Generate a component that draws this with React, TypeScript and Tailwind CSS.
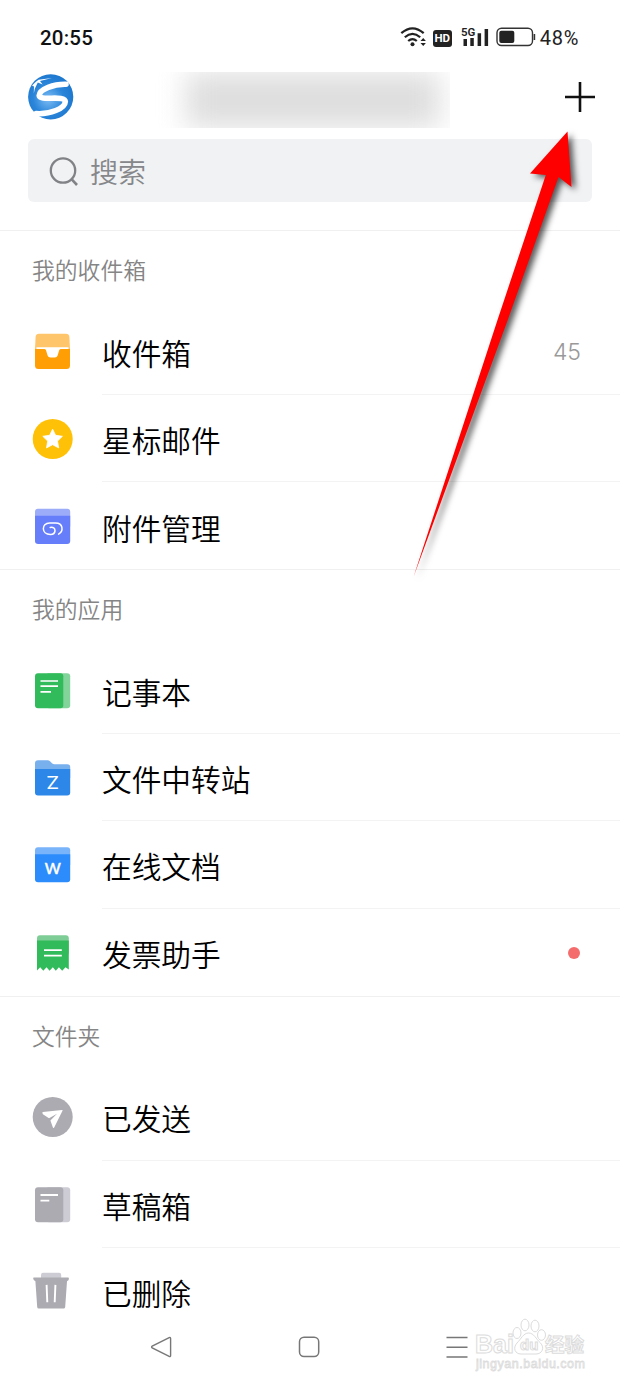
import React from "react";

const Glyph = ({ children }: { children: React.ReactNode }) => (
  <svg viewBox="0 0 41 41" className="w-[41px] h-[41px] shrink-0">
    {children}
  </svg>
);

const InboxIcon = () => (
  <Glyph>
    <path d="M7 2.7H34Q37 2.7 37.4 6L38 18H3L3.6 6Q4 2.7 7 2.7Z" fill="#ffc56b" />
    <path
      d="M3 18H13.2Q14.6 18 15 19.2L16.2 23.6Q16.8 25.8 19 25.8H22.2Q24.4 25.8 25 23.6L26.2 19.2Q26.6 18 28 18H38V34.5Q38 38 34.5 38H6.5Q3 38 3 34.5Z"
      fill="#ff9f05"
    />
    <path
      d="M4.5 16.3H36.5V18H29Q27.6 18 27.2 19.2L25.6 24.6Q25 26.6 22.8 26.6H18.4Q16.2 26.6 15.6 24.6L14 19.2Q13.6 18 12.2 18H4.5Z"
      fill="#fff"
    />
  </Glyph>
);

const StarIcon = () => (
  <Glyph>
    <circle cx="20.7" cy="20" r="20" fill="#ffc107" />
    <path
      d="M20.6 10.2L23.6 16.3L30.4 17.3L25.5 22.1L26.7 28.9L20.6 25.7L14.5 28.9L15.7 22.1L10.8 17.3L17.6 16.3Z"
      fill="#fff"
      stroke="#fff"
      strokeWidth="0.8"
      strokeLinejoin="round"
    />
  </Glyph>
);

const AttachmentIcon = () => (
  <Glyph>
    <rect x="3" y="2.7" width="35.2" height="20" rx="3" fill="#9dacf8" />
    <path d="M3 9.8H38.2V35Q38.2 38 35.2 38H6.2Q3 38 3 35Z" fill="#667efa" />
    <path
      d="M18.2 21.4Q22.8 20.6 23 24.6Q22.8 28.4 18.6 28.4C9 28.6 9.2 17 17.6 17H23.6C31.2 17 31.8 25 26.6 28.2"
      fill="none"
      stroke="#fff"
      strokeWidth="1.5"
      strokeLinecap="round"
    />
  </Glyph>
);

const NotebookIcon = () => (
  <Glyph>
    <rect x="14" y="2.3" width="24.2" height="35" rx="3" fill="#83d49a" />
    <rect x="3" y="2.3" width="28.3" height="35" rx="3" fill="#32bb5b" />
    <path d="M8.5 10H26M8.5 15.2H26M8.5 20.8H19" stroke="#fff" strokeWidth="1.7" />
  </Glyph>
);

const FolderIcon = () => (
  <Glyph>
    <path
      d="M6 2.2H15.5Q17 2.2 18 3.3L20 5.3Q21 6.2 22.5 6.2H35.2Q38.2 6.2 38.2 9V20H3V5.2Q3 2.2 6 2.2Z"
      fill="#78b0ee"
    />
    <path d="M3 11H38.2V34.5Q38.2 37.5 35.2 37.5H6Q3 37.5 3 34.5Z" fill="#2c87e8" />
    <text
      x="17.2"
      y="30.6"
      textAnchor="middle"
      fill="#fff"
      transform="scale(1.2 1)"
      className="font-['Inter',sans-serif] text-[17px] font-normal"
    >
      Z
    </text>
  </Glyph>
);

const DocIcon = () => (
  <Glyph>
    <rect x="3" y="2.2" width="35.2" height="20" rx="3" fill="#79b4fb" />
    <path d="M3 9.2H38.2V34.3Q38.2 37.3 35.2 37.3H6Q3 37.3 3 34.3Z" fill="#2d8cfb" />
    <text
      x="20.7"
      y="29.2"
      textAnchor="middle"
      fill="#fff"
      stroke="#fff"
      strokeWidth="0.3"
      className="font-['Lato',sans-serif] text-[21px] font-normal"
    >
      w
    </text>
  </Glyph>
);

const InvoiceIcon = () => (
  <Glyph>
    <rect x="5" y="2.2" width="31.8" height="20" rx="3" fill="#7fcd96" />
    <path
      d="M5 7.5H36.8V36.5L33.5 34.2L30.2 37.8L26.9 34.2L23.8 37.8L20.8 34.2L17.6 37.8L14.5 34.2L11.3 37.8L8.2 34.2L5 37.5Z"
      fill="#32bb5b"
    />
    <path d="M12 17.2H29.8M12 22.6H29.8" stroke="#fff" strokeWidth="1.8" />
  </Glyph>
);

const SentIcon = () => (
  <Glyph>
    <circle cx="20.7" cy="20" r="20" fill="#acabb2" />
    <path
      d="M10.8 15.1L30 12.9Q31 12.8 30.5 13.7L22.2 30.5Q21.5 31.5 20.9 30.4L18.4 23.5L25 16.8L17 21.3L10.9 17.2Q9.8 15.5 10.8 15.1Z"
      fill="#fff"
    />
  </Glyph>
);

const DraftIcon = () => (
  <Glyph>
    <rect x="14" y="2.2" width="24.2" height="35" rx="3" fill="#cdccd5" />
    <rect x="3" y="2.2" width="28.3" height="35" rx="3" fill="#acabb2" />
    <path d="M8.5 10H26M8.5 15.6H17.3" stroke="#fff" strokeWidth="1.8" />
  </Glyph>
);

const TrashIcon = () => (
  <Glyph>
    <path d="M9 7V3Q9 0.8 11 0.8H27.2Q29.2 0.8 29.2 3V7Z" fill="#cdccd5" />
    <path
      d="M1.5 5.6H36.5Q37.5 6.6 36.4 8.2L35 9.2L33.2 35.1Q33 36.6 31.5 36.6H6.7Q5.3 36.6 5.2 35.1L3.4 9.2L2 8.2Q0.6 6.6 1.5 5.6Z"
      fill="#acabb2"
    />
    <path d="M14.6 12.9L15.3 30.2M23.4 12.9L22.7 30.2" stroke="#fff" strokeWidth="1.9" />
  </Glyph>
);

interface Item {
  label: string;
  icon: React.ReactNode;
  count?: number;
  dot?: boolean;
}

const sections: { title: string; items: Item[] }[] = [
  {
    title: "我的收件箱",
    items: [
      { label: "收件箱", icon: <InboxIcon />, count: 45 },
      { label: "星标邮件", icon: <StarIcon /> },
      { label: "附件管理", icon: <AttachmentIcon /> },
    ],
  },
  {
    title: "我的应用",
    items: [
      { label: "记事本", icon: <NotebookIcon /> },
      { label: "文件中转站", icon: <FolderIcon /> },
      { label: "在线文档", icon: <DocIcon /> },
      { label: "发票助手", icon: <InvoiceIcon />, dot: true },
    ],
  },
  {
    title: "文件夹",
    items: [
      { label: "已发送", icon: <SentIcon /> },
      { label: "草稿箱", icon: <DraftIcon /> },
      { label: "已删除", icon: <TrashIcon /> },
    ],
  },
];

const StatusBar = () => (
  <div className="flex h-[72px] items-center pt-[5px] pl-10 pr-[41px] font-['Roboto',sans-serif] text-[#222]">
    <span className="text-[20.5px] font-medium tracking-[0.2px] text-[#111]">20:55</span>
    <div className="ml-auto flex items-center">
      <svg viewBox="0 0 28 22" className="-mt-1 w-7 h-[22px] shrink-0">
        <g fill="none" stroke="#222" strokeWidth="2.2">
          <path d="M1.3 7.2Q12.5 -2.6 23.7 7.2" />
          <path d="M4.8 11.2Q12.5 4.4 20.2 11.2" />
          <path d="M8.2 15Q12.5 11.2 16.8 15" />
        </g>
        <circle cx="12.5" cy="18.3" r="2" fill="#222" />
        <path d="M20.5 15L23.2 12L25.9 15ZM20.5 17L23.2 20L25.9 17Z" fill="#222" />
      </svg>
      <span className="ml-[5px] flex h-[17px] w-[19px] shrink-0 items-center justify-center rounded-[3px] bg-[#222] text-[11.5px] font-bold text-white">
        HD
      </span>
      <svg viewBox="0 0 29 22" className="ml-[9px] -mt-1 w-[29px] h-[22px] shrink-0">
        <text x="0" y="10" fill="#222" className="text-[11.5px] font-semibold">
          5G
        </text>
        <path d="M2.5 13H6V20H2.5ZM9.3 12H12.8V20H9.3ZM16.6 7.2H20.1V20H16.6ZM23.6 3H27.1V20H23.6Z" fill="#222" />
      </svg>
      <svg viewBox="0 0 40 20" className="ml-[6px] -mt-1 w-10 h-5 shrink-0">
        <rect x="1" y="1.3" width="35.5" height="17.2" rx="4.5" fill="none" stroke="#333" strokeWidth="1.4" />
        <rect x="3.3" y="3.7" width="15" height="12.4" rx="2" fill="#222" />
        <path d="M38.4 7V13" stroke="#333" strokeWidth="1.6" />
      </svg>
      <span className="ml-[4px] -mt-0.5 text-[20px] font-normal tracking-[0.7px]">48%</span>
    </div>
  </div>
);

const Logo = () => (
  <svg viewBox="0 0 46 46" className="w-[46px] h-[46px]">
    <defs>
      <radialGradient id="globe" cx="0.45" cy="0.55" r="0.55">
        <stop offset="0" stopColor="#7dbcf4" />
        <stop offset="0.6" stopColor="#2b86da" />
        <stop offset="1" stopColor="#1d78cf" />
      </radialGradient>
    </defs>
    <circle cx="22.7" cy="22.8" r="22.6" fill="url(#globe)" />
    <path
      d="M38 10.3C26 10 11.5 15 11.2 21.7C11.5 27.5 37 20.5 37.3 27.6C37 34.5 22 40.5 8.2 39.6"
      fill="none"
      stroke="#fff"
      strokeWidth="5.6"
      strokeLinecap="round"
    />
    <path d="M10.5 5.8L24 4L12 7L14.6 10.6L9.8 8.6L6.8 14.8L5.8 19.5L6 12.5L4 11.5L7.6 8Z" fill="#fff" />
  </svg>
);

const Header = () => (
  <div className="flex h-14 items-center pl-7">
    <div className="-mt-1.5">
      <Logo />
    </div>
    <div className="ml-[76px] h-14 w-[300px] overflow-hidden pl-[36px]">
      <div className="h-full w-[254px] bg-[#dedede] blur-[14px]"></div>
    </div>
    <svg viewBox="0 0 30 30" className="ml-[115px] w-[30px] h-[30px] -mt-1.5">
      <path d="M0 15H30M15 0V30" stroke="#111" strokeWidth="2.6" />
    </svg>
  </div>
);

const Row = ({ item, last }: { item: Item; last: boolean }) => (
  <div className="flex h-[87.3px] pl-8">
    <div className="pt-6">{item.icon}</div>
    <div
      className={`ml-[29px] flex flex-1 items-center pr-[39px] pt-[4px] ${
        last ? "" : "border-b border-[#f3f3f3]"
      }`}
    >
      <span className="text-[29.7px] leading-10 text-black">{item.label}</span>
      {item.count && (
        <span className="ml-auto font-['Inter',sans-serif] text-[23px] font-light text-[#999]">
          {item.count}
        </span>
      )}
      {item.dot && (
        <span className="ml-auto mr-px -mt-[3px] h-3 w-3 rounded-full bg-[#f56c6c]"></span>
      )}
    </div>
  </div>
);

const NavBar = () => (
  <div className="relative flex h-[66px] shrink-0 bg-white pb-3 pl-[150px]">
    <div className="flex items-center">
      <svg viewBox="0 0 22 22" className="w-[22px] h-[22px]">
        <path
          d="M19.2 1.6Q20.6 1 20.6 2.6V19.4Q20.6 21 19.2 20.4L2.2 12Q1 11 2.2 10Z"
          fill="none"
          stroke="#777"
          strokeWidth="1.4"
        />
      </svg>
      <svg viewBox="0 0 22 22" className="ml-[126px] w-[22px] h-[22px]">
        <rect x="1.5" y="1.2" width="19.2" height="19.4" rx="4.5" fill="none" stroke="#777" strokeWidth="1.5" />
      </svg>
      <svg viewBox="0 0 22 22" className="ml-[126px] w-[22px] h-[22px]">
        <path d="M0.5 1.5H21.5M0.5 11.3H21.5M0.5 21H21.5" stroke="#777" strokeWidth="1.6" />
      </svg>
    </div>
    {/* watermark */}
    <div className="absolute left-[475px] -top-[4px] h-[60px] w-[120px] whitespace-nowrap">
      <svg viewBox="0 0 120 60" className="h-[60px] w-[120px]">
        <g fill="#fff" stroke="#dcdcdc" strokeWidth="1">
          <text x="0" y="37" className="font-['Liberation_Sans',sans-serif] text-[25px] font-bold">
            Bai
          </text>
          <ellipse cx="42" cy="17" rx="4" ry="5.5" />
          <ellipse cx="50" cy="9" rx="4" ry="5.8" />
          <ellipse cx="60" cy="10" rx="4" ry="5.8" />
          <ellipse cx="66.5" cy="19" rx="4" ry="5.3" />
          <path d="M53.5 17C59 17 61 23 65.5 27C70 32 67 38 61 38H46C40 38 37.5 32 42 27C46 23 48.5 17 53.5 17Z" />
          <text x="45" y="34" className="font-['Liberation_Sans',sans-serif] text-[15px] font-bold">
            du
          </text>
          <text x="70" y="36" className="font-['Noto_Sans_CJK_SC',sans-serif] text-[19.5px] font-bold">
            经验
          </text>
        </g>
        <text
          x="1"
          y="52"
          fill="#fff"
          stroke="#dcdcdc"
          strokeWidth="0.8"
          textLength="109"
          className="font-['Liberation_Sans',sans-serif] text-[12.5px] font-normal"
        >
          jingyan.baidu.com
        </text>
      </svg>
    </div>
  </div>
);

const Arrow = () => (
  <svg
    viewBox="400 120 200 470"
    className="pointer-events-none absolute left-[400px] top-[120px] h-[470px] w-[200px] drop-shadow-[4px_3px_3px_rgba(0,0,0,0.65)]"
  >
    <path d="M567.5 131.5L571.5 187L558.5 177L507 322L413.5 577L497.5 320L545.8 175L530 173.5Z" fill="#fe0000" />
  </svg>
);

export default function App() {
  return (
    <div className="relative flex h-[1386px] w-[620px] flex-col overflow-hidden bg-white font-['Noto_Sans_CJK_SC',sans-serif] font-[350]">
      <StatusBar />
      <Header />
      <div className="mx-7 mt-[11px] flex h-[63px] shrink-0 items-center rounded-[6px] bg-[#f1f2f4] pl-[21px]">
        <svg viewBox="0 0 30 30" className="w-[30px] h-[30px]">
          <circle cx="14" cy="14.5" r="12.2" fill="none" stroke="#808285" strokeWidth="2.3" />
          <path d="M22.5 23.2L28 29" stroke="#808285" strokeWidth="2.6" />
        </svg>
        <span className="ml-[11px] text-[28px] text-[#85878a]">搜索</span>
      </div>
      <div className="mt-7 h-[1090px] overflow-hidden">
        {sections.map((section) => (
          <div key={section.title} className="border-t border-[#f0f0f0]">
            <h2 className="h-[76.4px] pl-8 pt-[22px] text-[22.8px] leading-[34px] text-[#858585]">
              {section.title}
            </h2>
            {section.items.map((item, index) => (
              <Row key={item.label} item={item} last={index === section.items.length - 1} />
            ))}
          </div>
        ))}
      </div>
      <NavBar />
      <Arrow />
    </div>
  );
}
